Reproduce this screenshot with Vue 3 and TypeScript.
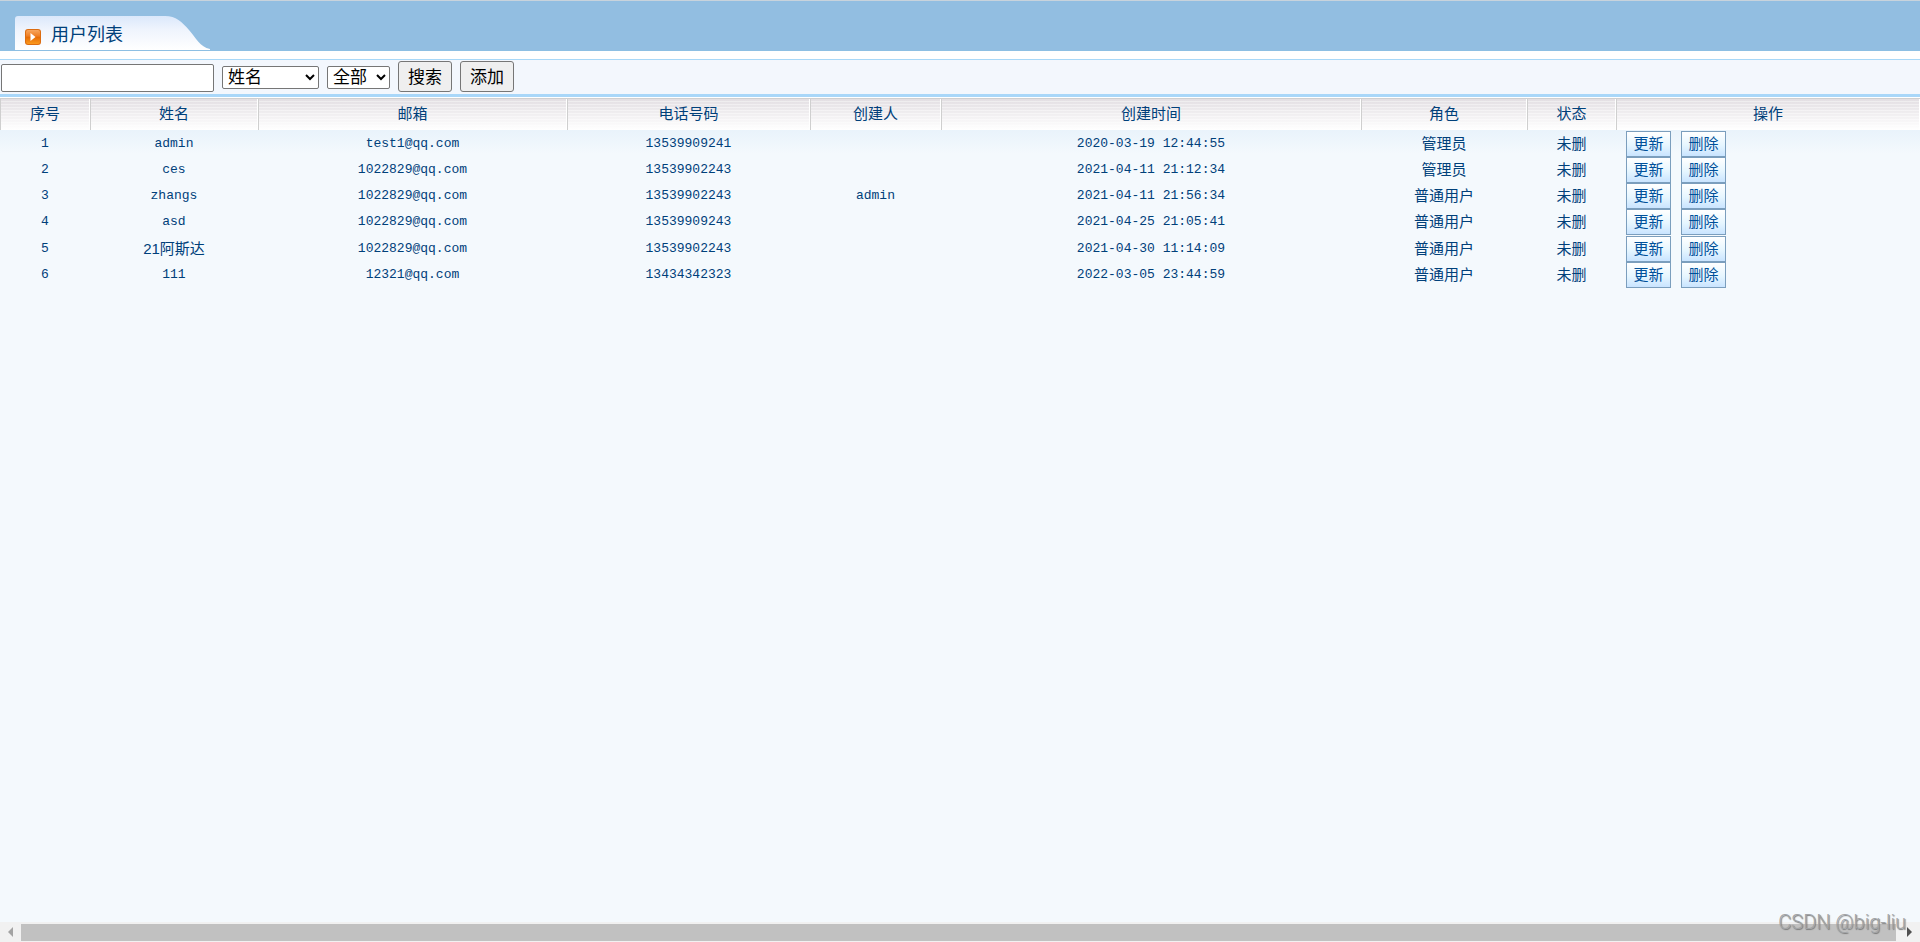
<script setup lang="ts">
import { ref } from 'vue'

interface User {
  id: number
  name: string
  email: string
  phone: string
  creator: string
  createdAt: string
  role: string
  status: string
}

interface Column {
  title: string
  weight: number
}

const columns: Column[] = [
  { title: '序号', weight: 90 },
  { title: '姓名', weight: 168 },
  { title: '邮箱', weight: 309 },
  { title: '电话号码', weight: 243 },
  { title: '创建人', weight: 131 },
  { title: '创建时间', weight: 420 },
  { title: '角色', weight: 166 },
  { title: '状态', weight: 89 },
  { title: '操作', weight: 304 },
]
const totalWeight = columns.reduce((sum, c) => sum + c.weight, 0)

const users: User[] = [
  { id: 1, name: 'admin', email: 'test1@qq.com', phone: '13539909241', creator: '', createdAt: '2020-03-19 12:44:55', role: '管理员', status: '未删' },
  { id: 2, name: 'ces', email: '1022829@qq.com', phone: '13539902243', creator: '', createdAt: '2021-04-11 21:12:34', role: '管理员', status: '未删' },
  { id: 3, name: 'zhangs', email: '1022829@qq.com', phone: '13539902243', creator: 'admin', createdAt: '2021-04-11 21:56:34', role: '普通用户', status: '未删' },
  { id: 4, name: 'asd', email: '1022829@qq.com', phone: '13539909243', creator: '', createdAt: '2021-04-25 21:05:41', role: '普通用户', status: '未删' },
  { id: 5, name: '21阿斯达', email: '1022829@qq.com', phone: '13539902243', creator: '', createdAt: '2021-04-30 11:14:09', role: '普通用户', status: '未删' },
  { id: 6, name: '111', email: '12321@qq.com', phone: '13434342323', creator: '', createdAt: '2022-03-05 23:44:59', role: '普通用户', status: '未删' },
]

const keyword = ref('')
const field = ref('name')
const state = ref('all')

const isLatin = (text: string): boolean => /^[\x20-\x7e]*$/.test(text)
</script>

<template>
  <div class="page">
    <header class="banner">
      <div class="tab">
        <svg class="tab-shape" viewBox="0 0 195 34" aria-hidden="true">
          <defs>
            <linearGradient id="tabFill" x1="0" y1="0" x2="0" y2="1">
              <stop offset="0" stop-color="#dbe8fb" />
              <stop offset="0.4" stop-color="#eff4fd" />
              <stop offset="1" stop-color="#ffffff" />
            </linearGradient>
          </defs>
          <path d="M0 34V3Q0 0 3 0H150C161 0 167 6 174 14C181 22 185 31 195 33V34Z" fill="url(#tabFill)" />
        </svg>
        <svg class="tab-icon" viewBox="0 0 16 16" aria-hidden="true">
          <defs>
            <linearGradient id="iconFill" x1="0" y1="0" x2="0" y2="1">
              <stop offset="0" stop-color="#f7a65e" />
              <stop offset="0.45" stop-color="#ee7d22" />
              <stop offset="0.5" stop-color="#e56a05" />
              <stop offset="1" stop-color="#fb9a1e" />
            </linearGradient>
          </defs>
          <rect width="16" height="16" rx="3" fill="#dc6c10" />
          <rect x="1" y="1" width="14" height="14" rx="2" fill="url(#iconFill)" />
          <path d="M5.5 4L10.5 8L5.5 12Z" fill="#fff" />
        </svg>
        <h1 class="tab-title">用户列表</h1>
      </div>
    </header>

    <div class="toolbar-band">
      <form class="toolbar" @submit.prevent>
        <input v-model="keyword" class="keyword" type="text" aria-label="关键字" />
        <select v-model="field" class="field" aria-label="搜索字段">
          <option value="name">姓名</option>
        </select>
        <select v-model="state" class="state" aria-label="状态">
          <option value="all">全部</option>
        </select>
        <button class="tool-button" type="submit">搜索</button>
        <button class="tool-button" type="button">添加</button>
      </form>
    </div>

    <main class="content">
      <table class="users">
        <colgroup>
          <col v-for="c in columns" :key="c.title" :style="{ width: (c.weight / totalWeight) * 100 + '%' }" />
        </colgroup>
        <thead>
          <tr>
            <th v-for="c in columns" :key="c.title" scope="col">{{ c.title }}</th>
          </tr>
        </thead>
        <tbody>
          <tr v-for="u in users" :key="u.id">
            <td class="latin">{{ u.id }}</td>
            <td :class="{ latin: isLatin(u.name) }">{{ u.name }}</td>
            <td class="latin">{{ u.email }}</td>
            <td class="latin">{{ u.phone }}</td>
            <td class="latin">{{ u.creator }}</td>
            <td class="latin">{{ u.createdAt }}</td>
            <td>{{ u.role }}</td>
            <td>{{ u.status }}</td>
            <td>
              <div class="actions">
                <button class="row-button" type="button">更新</button>
                <button class="row-button" type="button">删除</button>
              </div>
            </td>
          </tr>
        </tbody>
      </table>
    </main>

    <footer class="scrollbar">
      <button class="arrow" type="button" aria-label="向左滚动">
        <svg viewBox="0 0 5 10" aria-hidden="true"><path d="M5 0V10L0 5Z" fill="#a3a3a3" /></svg>
      </button>
      <div class="thumb"></div>
      <button class="arrow" type="button" aria-label="向右滚动">
        <svg viewBox="0 0 5 10" aria-hidden="true"><path d="M0 0V10L5 5Z" fill="#505050" /></svg>
      </button>
    </footer>

    <div class="watermark">CSDN @big-liu</div>
  </div>
</template>

<style>
body {
  margin: 0;
}
</style>

<style scoped>
.page {
  position: relative;
  display: flex;
  flex-direction: column;
  box-sizing: border-box;
  min-height: 100vh;
  background: #f4f9fd;
  color: #00407a;
  font-family: "Liberation Sans", "Noto Sans CJK SC", sans-serif;
}

.banner {
  display: flex;
  align-items: flex-end;
  box-sizing: border-box;
  height: 51px;
  padding-left: 15px;
  border-top: 1px solid #c8d3dc;
  border-bottom: 1px solid #8dbfe3;
  background: #92bee1;
}

.tab {
  position: relative;
  display: flex;
  align-items: center;
  gap: 10px;
  box-sizing: border-box;
  width: 195px;
  height: 34px;
  padding-left: 10px;
}

.tab-shape {
  position: absolute;
  inset: 0;
  width: 100%;
  height: 100%;
}

.tab-icon {
  position: relative;
  width: 16px;
  height: 16px;
  margin-top: 8px;
}

.tab-title {
  position: relative;
  margin: 4px 0 0;
  font-size: 18px;
  font-weight: 400;
  line-height: 32px;
}

.toolbar-band {
  padding-top: 8px;
  background: #fff;
}

.toolbar {
  display: flex;
  align-items: flex-end;
  gap: 8px;
  box-sizing: border-box;
  height: 38px;
  padding: 0 0 2px 1px;
  border-top: 1px solid #a8d8f8;
  border-bottom: 3px solid #a9d7f9;
  background: #f3f7fd;
}

.toolbar input,
.toolbar select,
.tool-button {
  box-sizing: border-box;
  margin: 0;
  border: 1px solid #767676;
  color: #000;
  font-family: "Liberation Sans", "Noto Sans CJK SC", sans-serif;
  font-size: 17px;
}

.keyword {
  width: 213px;
  height: 28px;
  padding: 1px 2px;
  border-radius: 2px;
  background: #fff;
}

.toolbar select {
  height: 23px;
  margin-bottom: 3px;
  padding: 0 0 0 1px;
  border-radius: 2px;
  background-color: #fff;
}

.field {
  width: 97px;
}

.state {
  width: 63px;
}

.tool-button {
  width: 54px;
  height: 31px;
  padding: 0 0 2px;
  border-radius: 3px;
  background: #efefef;
}

.content {
  flex: 1;
  border-top: 1px solid #fff;
  background: linear-gradient(#e9f3fb 32px, #f4f9fd 56px);
}

.users {
  width: 100%;
  border-collapse: separate;
  border-spacing: 0;
  table-layout: fixed;
  font-size: 15px;
  line-height: 20px;
}

.users th {
  box-sizing: border-box;
  height: 32px;
  padding: 0 0 2px;
  border-top: 1px solid #cfcfcf;
  box-shadow: inset 1px 0 #cfcfcf, inset -1px 0 #fff;
  background: repeating-linear-gradient(#ffffff00 0 2px, #ffffff66 2px 3px), linear-gradient(#e3dfe3, #fff);
  font-weight: 400;
}

.users td {
  height: 26px;
  padding: 0;
  text-align: center;
}

.users tr:nth-child(4n + 1) td {
  height: 27px;
}

.users .latin {
  font-family: "Liberation Mono", monospace;
  font-size: 13px;
}

.actions {
  display: flex;
  gap: 10px;
  padding-left: 10px;
}

.row-button {
  box-sizing: border-box;
  width: 45px;
  height: 26px;
  padding: 0;
  border: 1px solid #7b9ebd;
  background: linear-gradient(#fff, #e6f6ff 55%, #c9e4ff);
  color: #00509a;
  font-family: "Liberation Sans", "Noto Sans CJK SC", sans-serif;
  font-size: 15px;
  line-height: 20px;
}

.scrollbar {
  display: flex;
  align-items: center;
  height: 20px;
  background: #f1f1f1;
}

.arrow {
  display: flex;
  align-items: center;
  justify-content: center;
  width: 21px;
  height: 20px;
  padding: 0;
  border: 0;
  background: none;
}

.arrow svg {
  width: 5px;
  height: 10px;
}

.thumb {
  flex: 1;
  height: 17px;
  margin-right: 3px;
  background: #c1c1c1;
}

.watermark {
  position: absolute;
  right: 14px;
  bottom: 8px;
  color: #a2a4a6;
  font-family: Roboto, "Liberation Sans", sans-serif;
  font-size: 20px;
  font-weight: 300;
  line-height: 24px;
  text-shadow: 1px 1px 1px #777;
}
</style>
